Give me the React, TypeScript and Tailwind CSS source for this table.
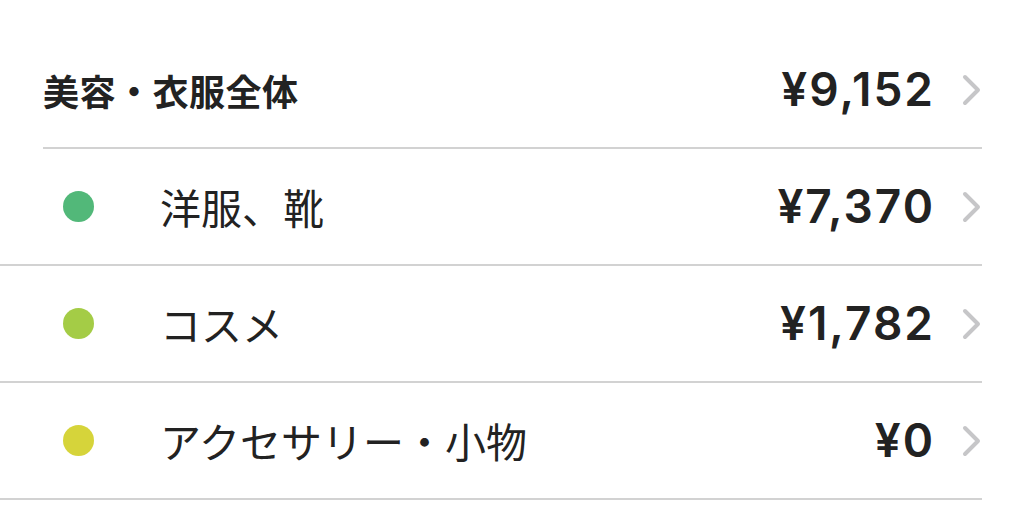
import React from "react";

interface Row {
  label: string;
  amount: string;
  color: string;
}

const rows: Row[] = [
  { label: "洋服、靴", amount: "¥7,370", color: "bg-[#52b879]" },
  { label: "コスメ", amount: "¥1,782", color: "bg-[#a4cc46]" },
  { label: "アクセサリー・小物", amount: "¥0", color: "bg-[#d6d43a]" },
];

const font = {
  fontFamily: '"Noto Sans CJK JP", "Noto Sans", sans-serif',
};

// Betrag: breitere Ziffern wie im Original
const priceFont = {
  fontFamily: 'Inter, "Noto Sans CJK JP", sans-serif',
};

function Chevron() {
  return (
    <svg width="22" height="34" viewBox="0 0 22 34" className="ml-[25px]">
      <path
        d="M5 4 L18 17 L5 30"
        fill="none"
        stroke="#c6c6c8"
        strokeWidth="4"
        strokeLinecap="round"
        strokeLinejoin="round"
      />
    </svg>
  );
}

export default function App() {
  return (
    <div className="w-[1024px] h-[529px] bg-white overflow-hidden text-[#222222]" style={font}>
      <div className="w-[982px] pt-[32px]">
        {/* Kopfzeile */}
        <div className="ml-[43px] h-[117px] flex items-center border-b-2 border-[#d2d2d2]">
          <span className="text-[36px] font-bold tracking-[0.5px] flex-1">美容・衣服全体</span>
          <span className="text-[46px] font-semibold tracking-[2px]" style={priceFont}>
            ¥9,152
          </span>
          <Chevron />
        </div>

        {/* Unterkategorien */}
        {rows.map((row) => (
          <div key={row.label} className="h-[117px] flex items-center border-b-2 border-[#d2d2d2]">
            <div className="w-[160px] flex items-center">
              <span className={`ml-[63px] w-[31px] h-[31px] rounded-full ${row.color}`} />
            </div>
            <span className="text-[41px] flex-1">{row.label}</span>
            <span className="text-[46px] font-semibold tracking-[2px]" style={priceFont}>
              {row.amount}
            </span>
            <Chevron />
          </div>
        ))}
      </div>
    </div>
  );
}
